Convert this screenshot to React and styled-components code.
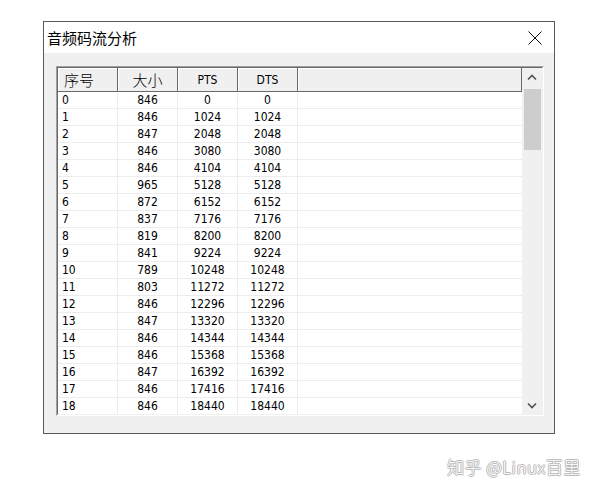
import React from "react";
import styled, { createGlobalStyle } from "styled-components";

const colors = {
  face: "#f0f0f0",
  shadow: "#a0a0a0",
  dark: "#696969",
  grid: "#ececec",
  thumb: "#cdcdcd",
  text: "#000000"
};

const GlobalStyle = createGlobalStyle`
  html, body {
    margin: 0;
    padding: 0;
    background: #ffffff;
  }
`;

const Page = styled.div`
  position: relative;
  width: 597px;
  height: 492px;
  box-sizing: border-box;
  padding: 21px 0 0 43px;
  font-family: "DejaVu Sans Condensed", "DejaVu Sans", "Noto Sans CJK SC", sans-serif;
`;

const Window = styled.section`
  box-sizing: border-box;
  width: 512px;
  height: 413px;
  border: 1px solid #5a5a5a;
  background: ${colors.face};
  display: flex;
  flex-direction: column;
`;

const TitleBar = styled.header`
  height: 31px;
  background: #ffffff;
  display: flex;
  align-items: center;
  justify-content: space-between;
  padding: 0 12px 0 3px;
`;

const Title = styled.h1`
  margin: 0;
  font-family: "Noto Sans CJK SC", sans-serif;
  font-weight: 400;
  font-size: 15px;
  color: ${colors.text};
`;

const Close = styled.button`
  border: 0;
  background: none;
  padding: 0;
  width: 14px;
  height: 14px;
  display: flex;
`;

const Client = styled.div`
  flex: 1;
  padding: 13px 10px 16px 12px;
`;

const ListBox = styled.div`
  box-sizing: border-box;
  width: 488px;
  height: 350px;
  border: 1px solid;
  border-color: ${colors.shadow} #ffffff #ffffff ${colors.shadow};
  display: flex;
  overflow: hidden;
`;

const Inner = styled.div`
  flex: 1;
  display: flex;
  border: 1px solid;
  border-color: ${colors.dark} ${colors.face} ${colors.face} ${colors.dark};
  background: #ffffff;
  overflow: hidden;
`;

const Table = styled.div`
  flex: 1;
  display: flex;
  flex-direction: column;
  overflow: hidden;
`;

const HeaderRow = styled.div`
  display: flex;
  height: 24px;
  flex-shrink: 0;
`;

const HeaderCell = styled.div`
  box-sizing: border-box;
  width: ${p => (p.fill ? "auto" : "60px")};
  flex: ${p => (p.fill ? 1 : "none")};
  height: 24px;
  background: ${colors.face};
  border-right: 1px solid ${colors.dark};
  border-bottom: 1px solid ${colors.dark};
  box-shadow: inset 1px 1px 0 #ffffff;
  display: flex;
  align-items: center;
  justify-content: ${p => (p.left ? "flex-start" : "center")};
  padding-left: ${p => (p.left ? "6px" : "0")};
  font-family: ${p =>
    p.cjk
      ? `"Noto Sans CJK SC", sans-serif`
      : `"DejaVu Sans Condensed", "DejaVu Sans", sans-serif`};
  font-size: ${p => (p.cjk ? "15px" : "12px")};
  font-weight: ${p => (p.cjk ? 300 : 400)};
  color: ${colors.text};
`;

const Row = styled.div`
  display: flex;
  height: 17px;
  flex-shrink: 0;
  border-bottom: 1px solid ${colors.grid};
  box-sizing: border-box;
`;

const Cell = styled.div`
  box-sizing: border-box;
  width: ${p => (p.fill ? "auto" : "60px")};
  flex: ${p => (p.fill ? 1 : "none")};
  border-right: ${p => (p.fill ? "none" : `1px solid ${colors.grid}`)};
  display: flex;
  align-items: center;
  justify-content: ${p => (p.left ? "flex-start" : "center")};
  padding-left: ${p => (p.left ? "4px" : "0")};
  font-size: 12px;
  color: ${colors.text};
`;

const ScrollBar = styled.div`
  width: 20px;
  flex-shrink: 0;
  background: ${colors.face};
  display: flex;
  flex-direction: column;
  align-items: center;
`;

const Arrow = styled.div`
  height: 18px;
  width: 100%;
  display: flex;
  align-items: center;
  justify-content: center;
`;

const Track = styled.div`
  flex: 1;
  width: 100%;
  padding-top: 3px;
  display: flex;
  justify-content: center;
`;

const Thumb = styled.div`
  width: 17px;
  height: 61px;
  background: ${colors.thumb};
`;

const Watermark = styled.div`
  position: absolute;
  left: 447px;
  top: 454px;
  font-family: "Noto Sans CJK SC", sans-serif;
  font-weight: 300;
  font-size: 17px;
  color: #ffffff;
  text-shadow: 1px 0 0 #b4b4b4, -1px 0 0 #b4b4b4, 0 1px 0 #b4b4b4,
    0 -1px 0 #b4b4b4;
  letter-spacing: 0.5px;
`;

const Chevron = ({ up }) => (
  <svg width="10" height="7" viewBox="0 0 10 7">
    <path
      d={up ? "M1 5.5 L5 1.5 L9 5.5" : "M1 1.5 L5 5.5 L9 1.5"}
      fill="none"
      stroke="#505050"
      strokeWidth="1.6"
    />
  </svg>
);

const rows = [
  [846, 0],
  [846, 1024],
  [847, 2048],
  [846, 3080],
  [846, 4104],
  [965, 5128],
  [872, 6152],
  [837, 7176],
  [819, 8200],
  [841, 9224],
  [789, 10248],
  [803, 11272],
  [846, 12296],
  [847, 13320],
  [846, 14344],
  [846, 15368],
  [847, 16392],
  [846, 17416],
  [846, 18440]
];

export default function App() {
  return (
    <Page>
      <GlobalStyle />
      <Window>
        <TitleBar>
          <Title>音频码流分析</Title>
          <Close aria-label="close">
            <svg width="14" height="14" viewBox="0 0 14 14">
              <path d="M0.5 0.5 L13.5 13.5 M13.5 0.5 L0.5 13.5" stroke="#111" strokeWidth="1" />
            </svg>
          </Close>
        </TitleBar>
        <Client>
          <ListBox>
            <Inner>
              <Table>
                <HeaderRow>
                  <HeaderCell cjk left>序号</HeaderCell>
                  <HeaderCell cjk>大小</HeaderCell>
                  <HeaderCell>PTS</HeaderCell>
                  <HeaderCell>DTS</HeaderCell>
                  <HeaderCell fill />
                </HeaderRow>
                {rows.map(([size, ts], i) => (
                  <Row key={i}>
                    <Cell left>{i}</Cell>
                    <Cell>{size}</Cell>
                    <Cell>{ts}</Cell>
                    <Cell>{ts}</Cell>
                    <Cell fill />
                  </Row>
                ))}
              </Table>
              <ScrollBar>
                <Arrow>
                  <Chevron up />
                </Arrow>
                <Track>
                  <Thumb />
                </Track>
                <Arrow>
                  <Chevron />
                </Arrow>
              </ScrollBar>
            </Inner>
          </ListBox>
        </Client>
      </Window>
      <Watermark>知乎 @Linux百里</Watermark>
    </Page>
  );
}
